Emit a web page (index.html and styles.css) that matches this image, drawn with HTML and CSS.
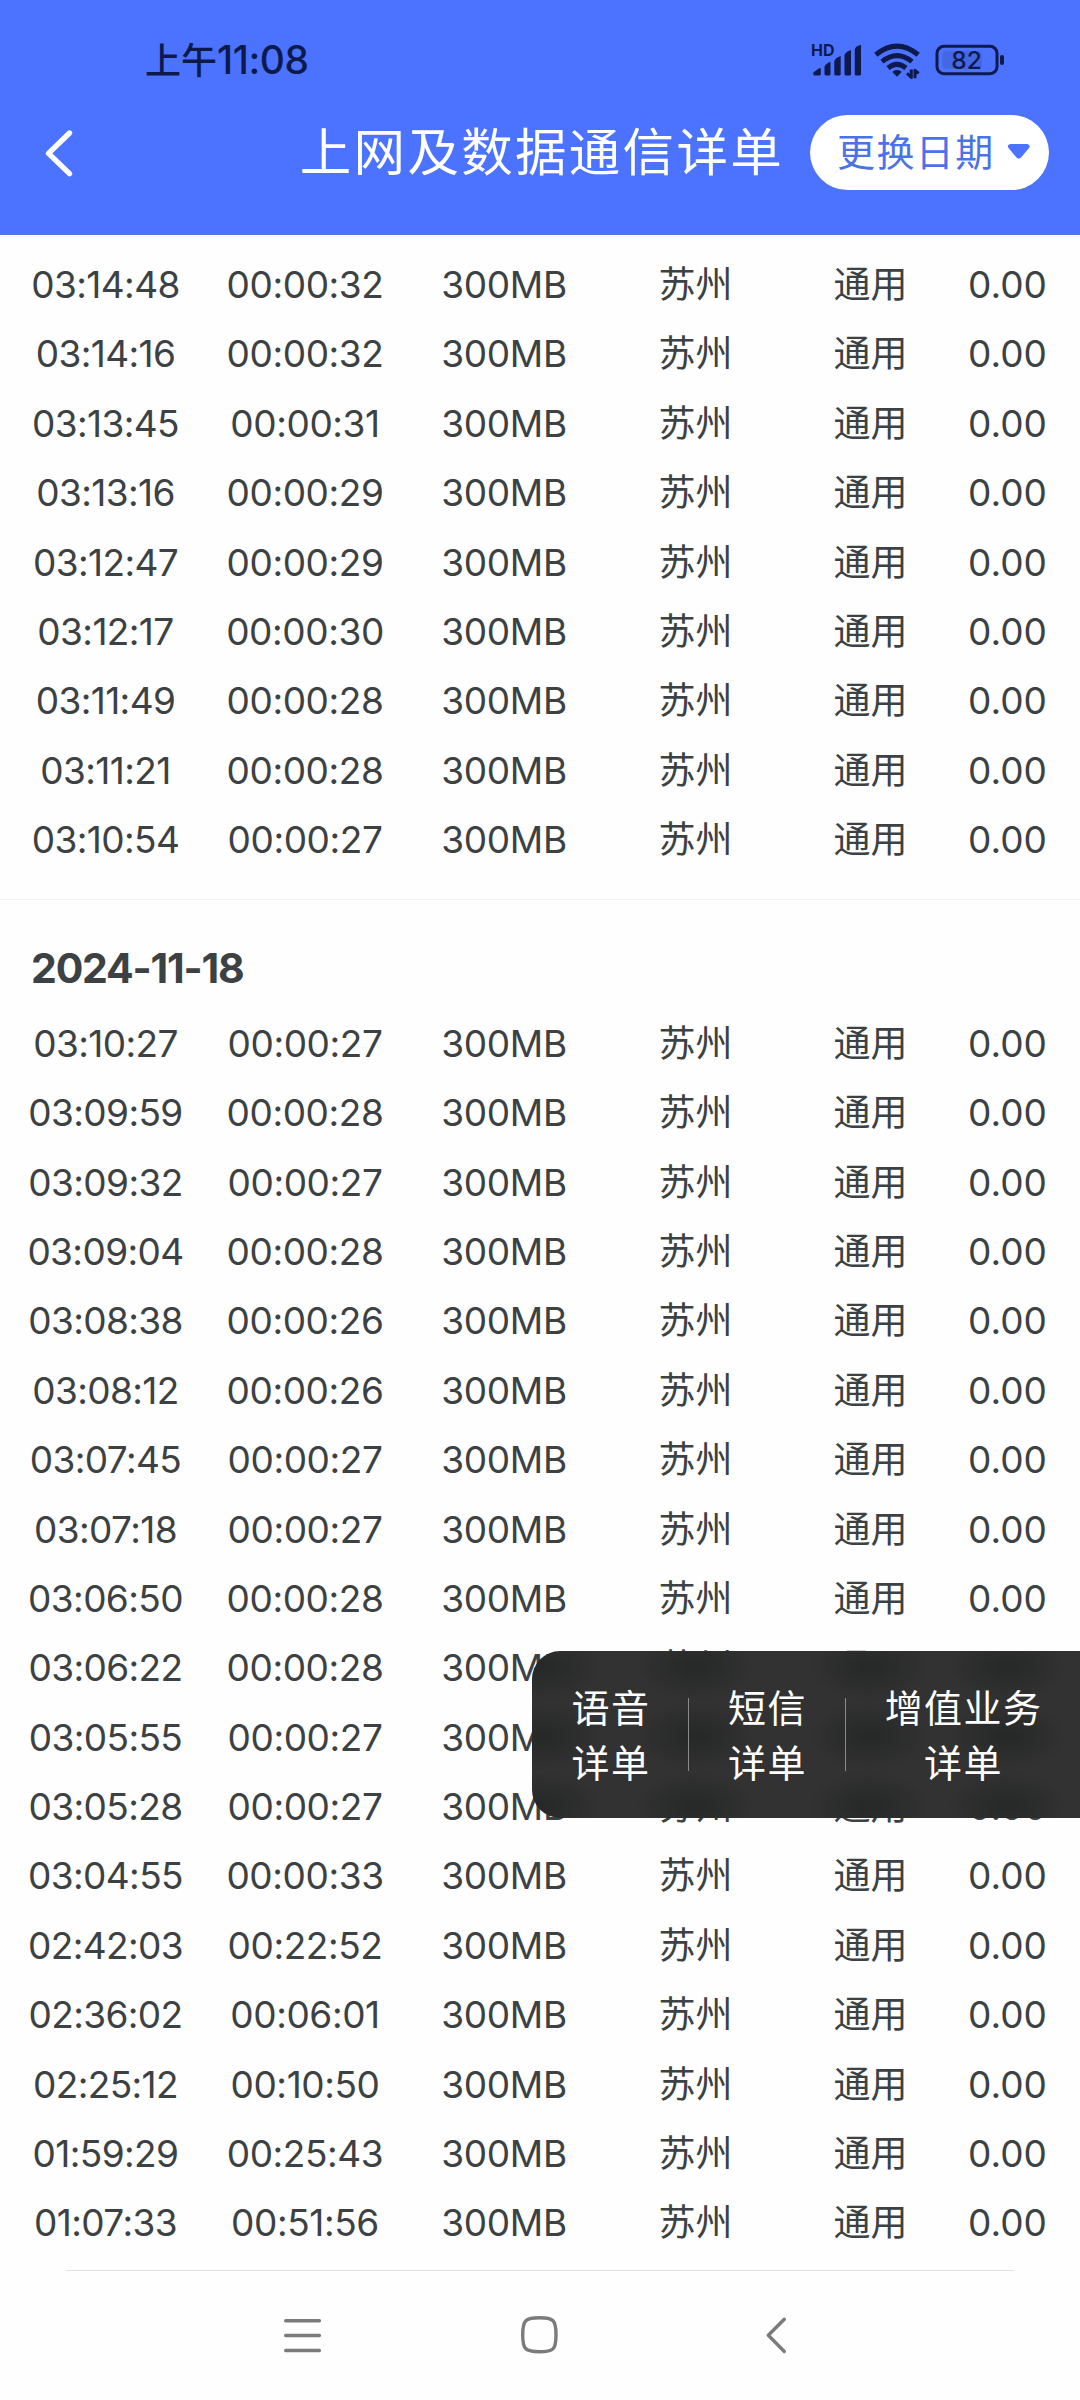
FILE: index.html
```html
<!DOCTYPE html>
<html lang="zh-CN">
<head>
<meta charset="utf-8">
<title>上网及数据通信详单</title>
<link rel="stylesheet" href="styles.css">
</head>
<body>
<div class="screen">
  <header class="header">
    <div class="status">
      <span class="clock">上午<span class="clock-digits">11:08</span></span>
      <svg class="status-icons" width="200" height="44" viewBox="0 0 200 44">
        <text class="hd" x="0" y="15.8" textLength="23.5" lengthAdjust="spacingAndGlyphs">HD</text>
        <g transform="translate(0 1)">
          <g class="fill">
            <path d="M2.3 31.5 L8.5 27 Q9.8 26.6 9.8 28.5 V33 Q9.8 34.5 8.3 34.5 H3.8 Q2.3 34.5 2.3 33 Z"/>
            <path d="M13.5 26 Q13.5 23.5 19.5 20.8 V33 Q19.5 34.5 18 34.5 H15 Q13.5 34.5 13.5 33 Z"/>
            <path d="M23.3 20.5 Q23.3 17.5 29.7 15 V33 Q29.7 34.5 28.2 34.5 H24.8 Q23.3 34.5 23.3 33 Z"/>
            <path d="M33.5 14.5 Q33.5 11.5 40 9 V33 Q40 34.5 38.5 34.5 H35 Q33.5 34.5 33.5 33 Z"/>
            <path d="M43.8 8.5 Q43.8 5.5 50 3.7 V33 Q50 34.5 48.5 34.5 H45.3 Q43.8 34.5 43.8 33 Z"/>
            <path d="M86 35.8 L81.8 31.6 Q81.2 30.6 82.3 30 Q86 27.8 89.7 30 Q90.8 30.6 90.2 31.6 Z"/>
          </g>
          <g class="wave">
            <path d="M64.8 13.8 Q86 -3.6 107.2 13.8"/>
            <path d="M71 20.6 Q86 8.6 101 20.6"/>
            <path d="M77 27 Q86 19.8 95 27"/>
          </g>
          <path class="traffic" d="M100.3 28.5 V36.5 L96 32.3 M104 37.2 V29.3 L107.6 32.4"/>
        </g>
        <rect class="level" x="131.5" y="11" width="39.5" height="18" rx="4"/>
        <rect class="case" x="126" y="6.3" width="60" height="27.4" rx="7"/>
        <rect class="fill" x="189" y="15" width="4" height="10" rx="2"/>
        <text class="pct" x="155.5" y="28.8" text-anchor="middle">82</text>
      </svg>
    </div>
    <div class="bar">
      <svg class="back" width="32" height="52" viewBox="0 0 32 52"><path d="M27.5 6 L6.5 26.4 L27.5 46.6"/></svg>
      <h1 class="title">上网及数据通信详单</h1>
      <button class="date-button">更换日期<svg width="24" height="17" viewBox="0 0 24 17"><path d="M3.5 1 H20 Q24 1.5 22 5 L14 14.5 Q11.8 16.8 9.5 14.5 L1.5 5 Q-0.5 1.5 3.5 1 Z"/></svg></button>
    </div>
  </header>

  <main class="list">
    <section class="group">
      <div class="row"><span>03:14:48</span><span>00:00:32</span><span>300MB</span><span>苏州</span><span>通用</span><span>0.00</span></div>
      <div class="row"><span>03:14:16</span><span>00:00:32</span><span>300MB</span><span>苏州</span><span>通用</span><span>0.00</span></div>
      <div class="row"><span>03:13:45</span><span>00:00:31</span><span>300MB</span><span>苏州</span><span>通用</span><span>0.00</span></div>
      <div class="row"><span>03:13:16</span><span>00:00:29</span><span>300MB</span><span>苏州</span><span>通用</span><span>0.00</span></div>
      <div class="row"><span>03:12:47</span><span>00:00:29</span><span>300MB</span><span>苏州</span><span>通用</span><span>0.00</span></div>
      <div class="row"><span>03:12:17</span><span>00:00:30</span><span>300MB</span><span>苏州</span><span>通用</span><span>0.00</span></div>
      <div class="row"><span>03:11:49</span><span>00:00:28</span><span>300MB</span><span>苏州</span><span>通用</span><span>0.00</span></div>
      <div class="row"><span>03:11:21</span><span>00:00:28</span><span>300MB</span><span>苏州</span><span>通用</span><span>0.00</span></div>
      <div class="row"><span>03:10:54</span><span>00:00:27</span><span>300MB</span><span>苏州</span><span>通用</span><span>0.00</span></div>
    </section>
    <section class="group">
      <h2 class="day">2024-11-18</h2>
      <div class="row"><span>03:10:27</span><span>00:00:27</span><span>300MB</span><span>苏州</span><span>通用</span><span>0.00</span></div>
      <div class="row"><span>03:09:59</span><span>00:00:28</span><span>300MB</span><span>苏州</span><span>通用</span><span>0.00</span></div>
      <div class="row"><span>03:09:32</span><span>00:00:27</span><span>300MB</span><span>苏州</span><span>通用</span><span>0.00</span></div>
      <div class="row"><span>03:09:04</span><span>00:00:28</span><span>300MB</span><span>苏州</span><span>通用</span><span>0.00</span></div>
      <div class="row"><span>03:08:38</span><span>00:00:26</span><span>300MB</span><span>苏州</span><span>通用</span><span>0.00</span></div>
      <div class="row"><span>03:08:12</span><span>00:00:26</span><span>300MB</span><span>苏州</span><span>通用</span><span>0.00</span></div>
      <div class="row"><span>03:07:45</span><span>00:00:27</span><span>300MB</span><span>苏州</span><span>通用</span><span>0.00</span></div>
      <div class="row"><span>03:07:18</span><span>00:00:27</span><span>300MB</span><span>苏州</span><span>通用</span><span>0.00</span></div>
      <div class="row"><span>03:06:50</span><span>00:00:28</span><span>300MB</span><span>苏州</span><span>通用</span><span>0.00</span></div>
      <div class="row"><span>03:06:22</span><span>00:00:28</span><span>300MB</span><span>苏州</span><span>通用</span><span>0.00</span></div>
      <div class="row"><span>03:05:55</span><span>00:00:27</span><span>300MB</span><span>苏州</span><span>通用</span><span>0.00</span></div>
      <div class="row"><span>03:05:28</span><span>00:00:27</span><span>300MB</span><span>苏州</span><span>通用</span><span>0.00</span></div>
      <div class="row"><span>03:04:55</span><span>00:00:33</span><span>300MB</span><span>苏州</span><span>通用</span><span>0.00</span></div>
      <div class="row"><span>02:42:03</span><span>00:22:52</span><span>300MB</span><span>苏州</span><span>通用</span><span>0.00</span></div>
      <div class="row"><span>02:36:02</span><span>00:06:01</span><span>300MB</span><span>苏州</span><span>通用</span><span>0.00</span></div>
      <div class="row"><span>02:25:12</span><span>00:10:50</span><span>300MB</span><span>苏州</span><span>通用</span><span>0.00</span></div>
      <div class="row"><span>01:59:29</span><span>00:25:43</span><span>300MB</span><span>苏州</span><span>通用</span><span>0.00</span></div>
      <div class="row"><span>01:07:33</span><span>00:51:56</span><span>300MB</span><span>苏州</span><span>通用</span><span>0.00</span></div>
    </section>
  </main>

  <nav class="shortcuts">
    <a>语音<br>详单</a>
    <a>短信<br>详单</a>
    <a>增值业务<br>详单</a>
  </nav>

  <footer class="system-nav">
    <svg width="44" height="44" viewBox="0 0 44 44"><path d="M4.7 6.7 H38.4 M4.7 21.5 H38.4 M4.7 36.5 H38.4"/></svg>
    <svg width="44" height="44" viewBox="0 0 44 44"><path d="M21.5 3.8 C35.5 3.8 38 6 38 21 C38 35.5 35.5 37.8 21.5 37.8 C7.5 37.8 4.7 35.5 4.7 21 C4.7 6 7.5 3.8 21.5 3.8 Z"/></svg>
    <svg width="44" height="44" viewBox="0 0 44 44"><path d="M29.3 5.2 L13.3 21.3 L29.3 37.5"/></svg>
  </footer>
</div>
</body>
</html>
```
FILE: styles.css
```css
* {
  box-sizing: border-box;
}

body {
  margin: 0;
  background: #fefefe;
  color: #3c4143;
  font-family: Inter, "Noto Sans CJK SC", sans-serif;
}

.screen {
  position: relative;
  display: flex;
  flex-direction: column;
  width: 1080px;
  height: 2400px;
  overflow: hidden;
}

.header {
  height: 235px;
  flex: none;
  background: #4b73ff;
  border-bottom: 1px solid #5674d8;
}

.status {
  display: flex;
  justify-content: space-between;
  align-items: center;
  height: 104px;
  padding: 16px 69px 0 145px;
}

.clock {
  color: #0e1a4c;
  font-size: 36px;
  font-weight: 500;
  line-height: 60px;
}

.clock-digits {
  font-size: 39px;
  letter-spacing: -0.5px;
}

.status-icons {
  margin-top: 4px;
  overflow: visible;
}

.status-icons .fill {
  fill: #0e1a4c;
}

.status-icons .hd {
  fill: #0e1a4c;
  font-size: 16.5px;
  font-weight: 700;
}

.status-icons .pct {
  fill: #0e1a4c;
  font-size: 24.5px;
  font-weight: 500;
}

.wave {
  fill: none;
  stroke: #0e1a4c;
  stroke-width: 5;
}

.traffic {
  fill: none;
  stroke: #0e1a4c;
  stroke-width: 3;
  stroke-linejoin: round;
}

.level {
  fill: #4467e4;
}

.case {
  fill: none;
  stroke: #0e1a4c;
  stroke-width: 3;
}

.bar {
  display: flex;
  align-items: center;
  height: 97px;
  padding: 0 31px 0 42px;
}

.back {
  fill: none;
  stroke: #fff;
  stroke-width: 5.4;
  stroke-linecap: round;
  stroke-linejoin: round;
}

.title {
  margin: 0 0 2px auto;
  color: #fff;
  font-size: 51.5px;
  font-weight: 400;
  line-height: 74px;
  letter-spacing: 2.3px;
}

.date-button {
  display: flex;
  align-items: center;
  justify-content: space-between;
  width: 239px;
  height: 75px;
  margin-left: 26px;
  padding: 0 18px 2px 27px;
  border: 0;
  border-radius: 38px;
  background: #fff;
  color: #4b73e8;
  font: 400 38px/50px Inter, "Noto Sans CJK SC", sans-serif;
  letter-spacing: 1.4px;
}

.date-button svg {
  fill: #4b73ff;
}

.list {
  padding-top: 15px;
}

.group + .group {
  margin-top: 24.6px;
  border-top: 1px solid #f0f1f1;
}

.day {
  margin: 0;
  padding: 34px 0 0 31px;
  height: 109px;
  font-size: 41px;
  font-weight: 700;
  line-height: 68px;
  letter-spacing: -1.2px;
}

.row {
  display: grid;
  grid-template-columns: 211px 188px 210px 173px 177px 97px;
  height: 69.38px;
  font-size: 37px;
  line-height: 69.38px;
  text-align: center;
  white-space: nowrap;
}

.row span:nth-child(1) {
  letter-spacing: -0.6px;
}

.row span:nth-child(2) {
  letter-spacing: -0.4px;
}

.row span:nth-child(3) {
  letter-spacing: -0.3px;
}

/* Opaque panel with the soft shade of the list rows behind it, one layer per column */
.shortcuts {
  position: absolute;
  top: 1651px;
  right: 0;
  display: grid;
  grid-template-columns: 156px 157px 235px;
  align-items: center;
  height: 167px;
  border-radius: 28px 0 0 28px;
  background-color: #323232;
  background-image:
    radial-gradient(closest-side, #272828 10%, #27282800),
    radial-gradient(closest-side, #272828 10%, #27282800),
    radial-gradient(closest-side, #272828 10%, #27282800),
    radial-gradient(closest-side, #272828 10%, #27282800);
  background-size: 120px 69.4px;
  background-position: -50px -19px, 103px -19px, 277px -19px, 415px -19px;
  background-repeat: repeat-y;
  color: #fff;
  font-size: 38px;
  line-height: 55px;
  letter-spacing: 1.4px;
  text-align: center;
}

.shortcuts a {
  padding: 2px 0 0 2px;
}

.shortcuts a + a {
  background: linear-gradient(#8a8a8a, #8a8a8a) left center / 1px 73px no-repeat;
}

.system-nav {
  display: flex;
  justify-content: space-between;
  height: 130px;
  margin: auto 66px 0;
  padding: 43px 215px 0 215px;
  border-top: 1px solid #e2e2e2;
}

.system-nav svg {
  fill: none;
  stroke: #7b7b7b;
  stroke-width: 3.4;
  stroke-linecap: round;
  stroke-linejoin: round;
}
```
